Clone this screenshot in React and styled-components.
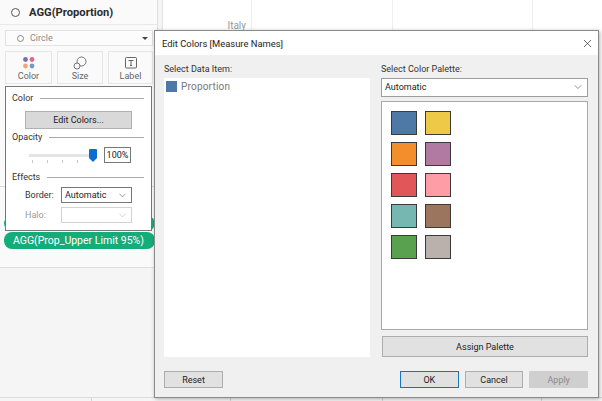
import React from 'react';
import styled, { createGlobalStyle } from 'styled-components';
import { ChevronDown, X } from 'lucide-react';

const GlobalStyle = createGlobalStyle`
    html, body {
        margin: 0;
        padding: 0;
        background: #fff;
    }
    * {
        box-sizing: border-box;
    }
`;

const Page = styled.div`
    position: relative;
    width: 602px;
    height: 401px;
    overflow: hidden;
    display: flex;
    flex-direction: column;
    font-family: Roboto, "Open Sans", sans-serif;
    font-size: 9px;
    color: #333;
    background: #fff;
`;

const Workspace = styled.div`
    flex: 1;
    display: flex;
    min-height: 0;
`;

const Footer = styled.div`
    height: 4px;
    display: flex;
    background: #f5f5f5;
    border-top: 1px solid #dcdcdc;
`;

const FooterCell = styled.div`
    width: ${(props) => props.$width}px;
    height: 100%;
    border-right: 1px solid #d4d4d4;
`;

const SideColumn = styled.div`
    width: 163px;
    flex-shrink: 0;
    background: #f5f5f5;
    border-right: 1px solid #e4e4e4;
`;

const MarksCard = styled.div`
    width: 158px;
    height: 268px;
    background: #fafafa;
    border-right: 1px solid #dedede;
    border-bottom: 1px solid #dedede;
`;

const MarksHeader = styled.div`
    height: 25px;
    display: flex;
    align-items: center;
    gap: 9px;
    padding-left: 11px;
    border-bottom: 1px solid #e8e8e8;
    font-size: 11.2px;
    font-weight: 700;
    color: #2b2b2b;
`;

const Ring = styled.span`
    width: ${(props) => props.$size}px;
    height: ${(props) => props.$size}px;
    border: 1px solid ${(props) => props.$color};
    border-radius: 50%;
    flex-shrink: 0;
`;

const MarkSelect = styled.div`
    margin: 5px 0 0 5px;
    width: 148px;
    height: 16px;
    display: flex;
    align-items: center;
    gap: 6px;
    padding-left: 11px;
    border: 1px solid #e2e2e2;
    background: #fcfcfc;
    color: #8a8a8a;
`;

const MarkSelectArrow = styled.span`
    margin-left: auto;
    margin-right: 4px;
    width: 0;
    height: 0;
    border-left: 3px solid transparent;
    border-right: 3px solid transparent;
    border-top: 3px solid #444;
`;

const MarkButtons = styled.div`
    margin: 5px 0 0 5px;
    display: flex;
    gap: 5px;
`;

const MarkButton = styled.div`
    width: ${(props) => props.$width}px;
    height: 33px;
    display: flex;
    flex-direction: column;
    align-items: center;
    justify-content: flex-end;
    gap: 1px;
    padding-bottom: 2px;
    border: 1px solid #e6e6e6;
    color: #666;
`;

const MarksRule = styled.div`
    margin-top: 102px;
    height: 1px;
    background: #dcdcdc;
`;

const Pill = styled.div`
    margin: ${(props) => props.$top}px 0 0 4px;
    width: 151px;
    height: ${(props) => props.$height}px;
    display: flex;
    align-items: center;
    padding-left: 9px;
    border-radius: 8px;
    background: #13ad7a;
    color: #fff;
    font-size: 10.5px;
    white-space: nowrap;
`;

const Chart = styled.div`
    flex: 1;
    display: flex;
    background: #fff;
`;

const ChartColumn = styled.div`
    width: ${(props) => props.$width}px;
    flex-shrink: 0;
    border-right: 1px solid #eee;
    padding: 20px 5px 0 0;
    text-align: right;
    color: #999;
    font-size: 10px;
`;

const ColorPopover = styled.div`
    position: absolute;
    left: 5px;
    top: 86px;
    width: 147px;
    height: 145px;
    padding: 5px 7px 0 6px;
    background: #fff;
    border: 1px solid #777;
    color: #333;
`;

const SectionTitle = styled.div`
    height: 12px;
    display: flex;
    align-items: center;
    gap: 7px;
    margin-top: ${(props) => props.$top || 0}px;
    &::after {
        content: "";
        flex: 1;
        height: 1px;
        background: #aaa;
    }
`;

const EditButton = styled.div`
    margin: 7px 0 0 13px;
    width: 107px;
    height: 18px;
    display: flex;
    align-items: center;
    justify-content: center;
    background: #d9d9d9;
    border: 1px solid #b0b0b0;
    color: #222;
`;

const OpacityRow = styled.div`
    margin: 4px 0 0 17px;
    display: flex;
    align-items: center;
    justify-content: space-between;
    padding-right: 13px;
    height: 16px;
`;

const Slider = styled.div`
    position: relative;
    width: 68px;
    height: 16px;
`;

const SliderTrack = styled.div`
    position: absolute;
    left: 0;
    right: 1px;
    top: 7px;
    height: 3px;
    background: #e4e4e4;
`;

const SliderTick = styled.span`
    position: absolute;
    left: ${(props) => props.$left}px;
    top: 13px;
    width: 1px;
    height: 3px;
    background: #c8c8c8;
`;

const SliderThumb = styled.svg`
    position: absolute;
    right: 0;
    top: 2px;
`;

const OpacityInput = styled.div`
    width: 27px;
    height: 16px;
    display: flex;
    align-items: center;
    justify-content: center;
    background: #fff;
    border: 1px solid #777;
    color: #222;
`;

const FieldRow = styled.div`
    margin: ${(props) => props.$top}px 0 0 13px;
    display: flex;
    align-items: center;
    color: ${(props) => (props.$disabled ? '#999' : '#333')};
`;

const FieldLabel = styled.span`
    width: 36px;
`;

const FieldSelect = styled.div`
    width: 71px;
    height: 16px;
    display: flex;
    align-items: center;
    justify-content: space-between;
    padding: 0 3px;
    background: #fff;
    border: 1px solid ${(props) => (props.$disabled ? '#d2d2d2' : '#777')};
    color: #222;
`;

const Dialog = styled.div`
    position: absolute;
    left: 154px;
    top: 30px;
    width: 445px;
    height: 368px;
    display: flex;
    flex-direction: column;
    background: #f0f0f0;
    border: 1px solid #8a8a8a;
    box-shadow: 1px 1px 4px rgba(0, 0, 0, 0.3);
`;

const DialogTitleBar = styled.div`
    height: 24px;
    flex-shrink: 0;
    display: flex;
    align-items: center;
    justify-content: space-between;
    padding: 0 4px 0 7px;
    background: #fff;
    font-size: 9.4px;
    color: #222;
`;

const DialogBody = styled.div`
    flex: 1;
    display: grid;
    grid-template-columns: 206px 207px;
    grid-template-rows: 1fr 16px;
    column-gap: 11px;
    row-gap: 14px;
    padding: 8px 0 10px 9px;
    min-height: 0;
`;

const Pane = styled.div`
    display: flex;
    flex-direction: column;
    min-height: 0;
`;

const PaneLabel = styled.div`
    height: 15px;
    line-height: 12px;
    color: #333;
`;

const DataList = styled.div`
    flex: 1;
    background: #fff;
`;

const DataItem = styled.div`
    display: flex;
    align-items: center;
    gap: 4px;
    padding: 3px 0 0 2px;
    color: #777;
    font-size: 10px;
    letter-spacing: 0.2px;
`;

const ItemSwatch = styled.span`
    width: 11px;
    height: 11px;
    background: #4e79a7;
`;

const PaletteSelect = styled.div`
    height: 19px;
    display: flex;
    align-items: center;
    justify-content: space-between;
    padding: 0 3px 0 3px;
    background: #fff;
    border: 1px solid #9c9c9c;
    color: #222;
`;

const PaletteBox = styled.div`
    margin-top: 4px;
    height: 230px;
    padding: 9px 0 0 9px;
    display: grid;
    grid-template-columns: repeat(2, 26px);
    grid-auto-rows: 24px;
    column-gap: 8px;
    row-gap: 7px;
    background: #fff;
    border: 1px solid #a8a8a8;
`;

const PaletteSwatch = styled.span`
    background: ${(props) => props.$color};
    border: 1px solid #3a3a3a;
`;

const Button = styled.div`
    width: ${(props) => props.$width || 59}px;
    height: ${(props) => props.$height || 17}px;
    display: flex;
    align-items: center;
    justify-content: center;
    background: ${(props) => (props.$disabled ? '#cfcfcf' : '#e1e1e1')};
    border: 1px solid ${(props) => (props.$primary ? '#1673c4' : props.$disabled ? '#cfcfcf' : '#adadad')};
    color: ${(props) => (props.$disabled ? '#8a8a8a' : '#222')};
`;

const AssignButton = styled(Button)`
    margin: 6px 0 0 1px;
`;

const FooterLeft = styled.div`
    display: flex;
    align-items: flex-start;
`;

const FooterRight = styled.div`
    display: flex;
    gap: 6px;
    padding-left: 19px;
`;

const palette = [
    '#4e79a7', '#edc948',
    '#f28e2b', '#b07aa1',
    '#e15759', '#ff9da7',
    '#76b7b2', '#9c755f',
    '#59a14f', '#bab0ac',
];

function ColorIcon() {
    return (
        <svg width="14" height="14" viewBox="0 0 14 14">
            <circle cx="3.5" cy="3.5" r="2.4" fill="#7b6ea8" />
            <circle cx="10" cy="3.5" r="2.4" fill="#df6a7d" />
            <circle cx="3.5" cy="10" r="2.4" fill="#f0a777" />
            <circle cx="10" cy="10" r="2.4" fill="#6f9cc5" />
        </svg>
    );
}

function SizeIcon() {
    return (
        <svg width="14" height="14" viewBox="0 0 14 14" fill="none" stroke="#666" strokeWidth="0.9">
            <circle cx="8.5" cy="5.5" r="4.5" fill="#fafafa" />
            <circle cx="4" cy="10" r="3" fill="#fafafa" />
        </svg>
    );
}

function LabelIcon() {
    return (
        <svg width="14" height="14" viewBox="0 0 14 14" fill="none" stroke="#555" strokeWidth="0.9">
            <rect x="1.5" y="1.5" width="11" height="10.5" rx="1" />
            <path d="M4.5 4.5h5M7 4.5v5M6 9.5h2" />
        </svg>
    );
}

function App() {
    return (
        <Page>
            <GlobalStyle />
            <Workspace>
                <SideColumn>
                    <MarksCard>
                        <MarksHeader>
                            <Ring $size={9} $color="#555" />
                            AGG(Proportion)
                        </MarksHeader>
                        <MarkSelect>
                            <Ring $size={7} $color="#888" />
                            Circle
                            <MarkSelectArrow />
                        </MarkSelect>
                        <MarkButtons>
                            <MarkButton $width={47}>
                                <ColorIcon />
                                Color
                            </MarkButton>
                            <MarkButton $width={46}>
                                <SizeIcon />
                                Size
                            </MarkButton>
                            <MarkButton $width={45}>
                                <LabelIcon />
                                Label
                            </MarkButton>
                        </MarkButtons>
                        <MarksRule />
                        <Pill $top={29} $height={15} />
                        <Pill $top={1} $height={17}>AGG(Prop_Upper Limit 95%)</Pill>
                    </MarksCard>
                </SideColumn>
                <Chart>
                    <ChartColumn $width={89}>Italy</ChartColumn>
                    <ChartColumn $width={141} />
                    <ChartColumn $width={140} />
                </Chart>
            </Workspace>
            <Footer>
                <FooterCell $width={92} />
                <FooterCell $width={139} />
                <FooterCell $width={152} />
                <FooterCell $width={159} />
            </Footer>

            <ColorPopover>
                <SectionTitle>Color</SectionTitle>
                <EditButton>Edit Colors...</EditButton>
                <SectionTitle $top={2}>Opacity</SectionTitle>
                <OpacityRow>
                    <Slider>
                        <SliderTrack />
                        <SliderTick $left={3} />
                        <SliderTick $left={18} />
                        <SliderTick $left={33} />
                        <SliderTick $left={48} />
                        <SliderThumb width="8" height="13" viewBox="0 0 8 13">
                            <path d="M0 1a1 1 0 0 1 1-1h6a1 1 0 0 1 1 1v8l-4 4-4-4z" fill="#0a6fd0" />
                        </SliderThumb>
                    </Slider>
                    <OpacityInput>100%</OpacityInput>
                </OpacityRow>
                <SectionTitle $top={8}>Effects</SectionTitle>
                <FieldRow $top={4}>
                    <FieldLabel>Border:</FieldLabel>
                    <FieldSelect>
                        Automatic
                        <ChevronDown size={11} strokeWidth={1.2} color="#444" />
                    </FieldSelect>
                </FieldRow>
                <FieldRow $top={4} $disabled>
                    <FieldLabel>Halo:</FieldLabel>
                    <FieldSelect $disabled>
                        <span />
                        <ChevronDown size={11} strokeWidth={1.2} color="#aaa" />
                    </FieldSelect>
                </FieldRow>
            </ColorPopover>

            <Dialog>
                <DialogTitleBar>
                    Edit Colors [Measure Names]
                    <X size={13} strokeWidth={1.2} color="#222" />
                </DialogTitleBar>
                <DialogBody>
                    <Pane>
                        <PaneLabel>Select Data Item:</PaneLabel>
                        <DataList>
                            <DataItem>
                                <ItemSwatch />
                                Proportion
                            </DataItem>
                        </DataList>
                    </Pane>
                    <Pane>
                        <PaneLabel>Select Color Palette:</PaneLabel>
                        <PaletteSelect>
                            Automatic
                            <ChevronDown size={12} strokeWidth={1.2} color="#444" />
                        </PaletteSelect>
                        <PaletteBox>
                            {palette.map((color) => (
                                <PaletteSwatch key={color} $color={color} />
                            ))}
                        </PaletteBox>
                        <AssignButton $width={206} $height={21}>Assign Palette</AssignButton>
                    </Pane>
                    <FooterLeft>
                        <Button>Reset</Button>
                    </FooterLeft>
                    <FooterRight>
                        <Button $primary>OK</Button>
                        <Button>Cancel</Button>
                        <Button $disabled>Apply</Button>
                    </FooterRight>
                </DialogBody>
            </Dialog>
        </Page>
    );
}

export default App;
